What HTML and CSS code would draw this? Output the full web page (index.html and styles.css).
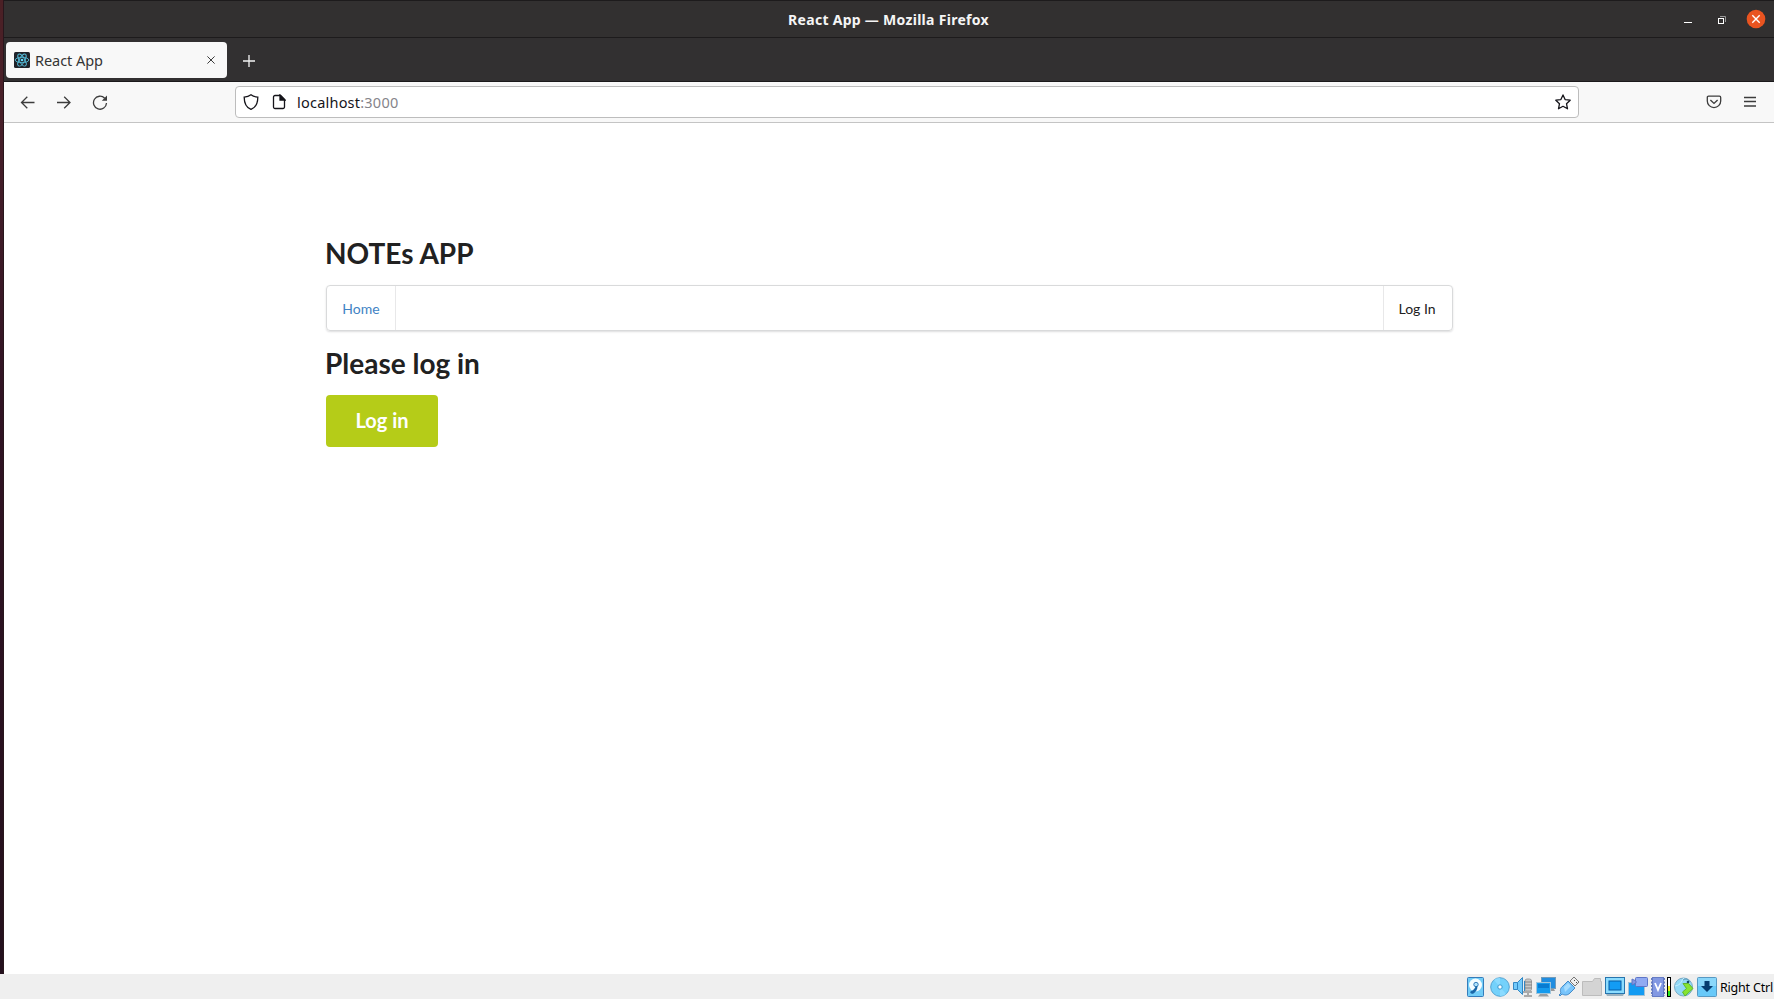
FILE: index.html
```html
<!DOCTYPE html>
<html lang="en">
<head>
<meta charset="utf-8">
<title>React App</title>
<link rel="stylesheet" href="styles.css">
</head>
<body>
<div class="screen">
  <div class="desktop-edge"></div>
  <div class="window">
    <header class="titlebar">
      <span class="window-title">React App — Mozilla Firefox</span>
      <div class="window-controls">
        <svg width="8" height="20" viewBox="0 0 8 20"><path d="M0 13.500h8" stroke="#fff"/></svg>
        <svg width="8" height="20" viewBox="0 0 8 20" fill="none"><path d="M2 7.500h5.500v5.500" stroke="#999"/><rect x=".5" y="9.500" width="5" height="5" stroke="#fff"/></svg>
        <svg width="20" height="20" viewBox="0 0 20 20"><circle cx="10" cy="10" r="9.300" fill="#e95420"/><path d="m6.300 6.300 7.400 7.400m0-7.400-7.400 7.400" stroke="#fff" stroke-width="1.400"/></svg>
      </div>
    </header>
    <div class="tabstrip">
      <div class="tab">
        <svg width="16" height="16" viewBox="0 0 16 16"><rect width="16" height="16" rx="1.500" fill="#20232a"/><g fill="none" stroke="#55bdda" stroke-width=".9"><ellipse cx="8" cy="8" rx="6.800" ry="2.700"/><ellipse cx="8" cy="8" rx="6.800" ry="2.700" transform="rotate(60 8 8)"/><ellipse cx="8" cy="8" rx="6.800" ry="2.700" transform="rotate(120 8 8)"/></g><circle cx="8" cy="8" r="1.300" fill="#61dafb"/></svg>
        <span class="tab-label">React App</span>
        <svg class="tab-close" width="8" height="8" viewBox="0 0 8 8"><path d="m.4.4 7.200 7.200m0-7.200L.4 7.600" stroke="#3c3c3c"/></svg>
      </div>
      <svg class="new-tab" width="12" height="12" viewBox="0 0 12 12"><path d="M6 0v12M0 6h12" stroke="#f4f4f4" stroke-width="1.300"/></svg>
    </div>
    <div class="toolbar">
      <div class="nav-buttons">
        <svg width="16" height="16" viewBox="0 0 16 16"><path d="M14.500 8.500H1.500m5.800-5.800-5.800 5.800 5.800 5.800"/></svg>
        <svg width="16" height="16" viewBox="0 0 16 16"><path d="M1 8.500h13M8.200 2.700 14 8.500l-5.800 5.800"/></svg>
        <svg width="16" height="16" viewBox="0 0 16 16"><path d="M12.700 4.200A6.500 6.500 0 1 0 14.500 9"/><path d="M15 1.500v5.200H9.800z" fill="#3c3c3c" stroke="none"/></svg>
      </div>
      <div class="urlbar">
        <svg width="16" height="16" viewBox="0 0 16 16"><path d="M8 .8c2 1.500 4.200 2.200 6.800 2.400C14.800 9.500 13 13.400 8 15.400 3 13.400 1.200 9.500 1.200 3.200 3.800 3 6 2.300 8 .8z"/></svg>
        <svg class="doc" width="14" height="16" viewBox="0 0 14 16"><path d="M3 1.500h5.500l4 4V13a1.500 1.500 0 0 1-1.500 1.500H3A1.500 1.500 0 0 1 1.500 13V3A1.500 1.500 0 0 1 3 1.500z"/><path d="M8 1v5h5z" fill="#15141a"/></svg>
        <span class="url">localhost<span class="port">:3000</span></span>
        <svg class="star" width="16" height="16" viewBox="0 0 16 16"><path d="m8 .9 2.100 4.700 5.100.6-3.700 3.500 1 5.100L8 12.300l-4.500 2.500 1-5.100L.8 6.200l5.100-.6z" stroke-linejoin="round"/></svg>
      </div>
      <div class="menu-buttons">
        <svg width="16" height="16" viewBox="0 0 16 16"><path d="M2.600 2.200h10.800c.8 0 1.300.5 1.300 1.300v3.400a6.700 6.700 0 0 1-13.400 0V3.500c0-.8.500-1.300 1.300-1.300z"/><path d="m4.400 6 3.600 3.400L11.600 6" stroke-width="1.400"/></svg>
        <svg width="14" height="16" viewBox="0 0 14 16"><path d="M1 3.500h12M1 7.500h12M1 12h12"/></svg>
      </div>
    </div>
    <main class="page">
      <div class="container">
        <h1 class="heading">NOTEs APP</h1>
        <nav class="menu">
          <a class="item home">Home</a>
          <a class="item login">Log In</a>
        </nav>
        <h1 class="heading prompt">Please log in</h1>
        <button class="button">Log in</button>
      </div>
    </main>
  </div>
</div>
<footer class="statusbar">
  <svg width="20" height="20" viewBox="0 0 20 20"><rect x=".5" y=".5" width="16" height="19" rx="1" fill="#72cdf8" stroke="#347dbb"/><circle cx="8.500" cy="8" r="6.500" fill="#f4fcff"/><circle cx="9" cy="7.500" r="2.200" fill="#b2e3fa" stroke="#347dbb"/><path d="M10.500 9c0 4-2 6-4 7.500-2 1-4-.5-3-2 1.500-1 4-1.500 5-5z" fill="#1967a8"/></svg>
  <svg width="20" height="20" viewBox="0 0 20 20"><circle cx="10" cy="10" r="9.300" fill="#74d1fb" stroke="#54a3d2"/><path d="M10 10 4 3a9 9 0 0 1 6-2zM10 10l6 7a9 9 0 0 1-6 2z" fill="#8bdbff"/><circle cx="10" cy="10" r="2.200" fill="#fff" stroke="#3898cf"/></svg>
  <svg width="20" height="20" viewBox="0 0 20 20"><rect x="12" y="2" width="6.500" height="12" rx="2" fill="#c9c9c9" stroke="#a0a0a0"/><path d="M10 15h9M15 14v4m-4 1h8" stroke="#aaa" stroke-width="2"/><path d="M12 5h7M12 8h7M12 11h7" stroke="#858585"/><path d="M.5 5.500h4l5-5v17l-5-5h-4z" fill="#72cafb" stroke="#3287c4"/><path d="M4.500 5.500v7M11.500 4v10" stroke="#3287c4"/></svg>
  <svg width="20" height="20" viewBox="0 0 20 20"><rect x="5.500" y=".5" width="14" height="11" fill="#208de0" stroke="#739bb9"/><path d="M14 12h4l1 2h-5z" fill="#999"/><rect x=".5" y="5.500" width="14" height="11" fill="#159bee" stroke="#9ec5dd"/><path d="M2 7h11v4H2z" fill="#087bd1"/><path d="M4 17h7l2 2.500H2z" fill="#999fa3"/></svg>
  <svg width="20" height="20" viewBox="0 0 20 20"><path d="m11 4 4-4 5 5-4 4z" fill="#eee" stroke="#777"/><path d="m15 3 1 1m1 1 1 1" stroke="#444"/><path d="m9 4 7 7-5 5c-3 3-6 2-8 1l-2 2-1-1 2-2c-1-2-1-5 2-7z" fill="#77c4fb" stroke="#458bc8"/><path d="m5 10 4-4 3 3-6 6z" fill="#a5dcff"/></svg>
  <svg width="20" height="20" viewBox="0 0 20 20"><path d="M.5 4.500h10l2-3h6v3h1v14H.5z" fill="#d4d4d4" stroke="#bcbcbc"/></svg>
  <svg width="20" height="20" viewBox="0 0 20 20"><rect x=".5" y=".5" width="19" height="16" fill="#8bdcff" stroke="#2775ae"/><rect x="4" y="4" width="12" height="9" fill="#139cf5" stroke="#075ca6"/><path d="M1 17h18l-1 2H2z" fill="#9cb2bf"/></svg>
  <svg width="20" height="20" viewBox="0 0 20 20"><rect x=".5" y="5.500" width="16" height="13" fill="#139bf2" stroke="#a5c2d3"/><rect x="7.500" y=".5" width="12" height="9" rx="1" fill="#91aaf2" stroke="#5e75c7"/><path d="m8 4-4-2v6l4-2z" fill="#8196e4" stroke="#5e75c7"/></svg>
  <svg width="14" height="20" viewBox="0 0 14 20"><rect x="1.500" y=".5" width="11" height="19" fill="#8298e2" stroke="#657bc4"/><path d="M.5 1v18M13.500 1v18" stroke="#657bc4" stroke-dasharray="2 1.500"/><path d="m4 6 3 7 3-7" fill="none" stroke="#fff" stroke-width="1.800"/></svg>
  <svg class="meter" width="4" height="20" viewBox="0 0 4 20"><path d="M0 0h4v20H0z"/><path d="M1 1h2v8H1z" fill="#fff"/><path d="M1 9h2v5H1z" fill="#e9ef22"/><path d="M1 14h2v5H1z" fill="#28e820"/></svg>
  <svg width="20" height="20" viewBox="0 0 20 20"><circle cx="9.500" cy="10" r="9" fill="#91d8f6" stroke="#7aabc6"/><path d="M10 1c-3 2-2 7-9 8" stroke="#c6efff" fill="none"/><path d="M9 3c4-2 6 0 6 2" fill="none" stroke="#5996b5"/><circle cx="14" cy="5" r="1.300" fill="#174966"/><path d="M9 6.500h5.500l4.500 5-8 7.500-2.500-4 4-3.500z" fill="#86e431" stroke="#60b52d"/></svg>
  <svg width="20" height="20" viewBox="0 0 20 20"><rect x=".5" y=".5" width="19" height="19" rx="1" fill="#68c9f9" stroke="#5799c3"/><path d="M1 1h18v8H1z" fill="#8ad7fb"/><path d="M7.500 4h5v5H16l-6 6-6-6h3.500z" fill="#063c70"/></svg>
  <span class="host-key">Right Ctrl</span>
</footer>
</body>
</html>
```
FILE: styles.css
```css
* { box-sizing: border-box; }
body { margin: 0; height: 999px; overflow: hidden; background: #fff; font-family: "Noto Sans", sans-serif; }
svg { display: block; flex: none; }
.screen { display: flex; height: 974px; }
.desktop-edge { width: 4px; background: linear-gradient(#4b2025 0, #48202a 120px, #301323 400px, #24101d 100%); border-right: 1px solid #28161c; }
.window { flex: 1; min-width: 0; display: flex; flex-direction: column; }
.titlebar { height: 38px; background: #323030; border-top: 1px solid #1d1b1c; border-bottom: 1px solid #1d1b1c; display: grid; grid-template-columns: 1fr auto 1fr; align-items: center; }
.window-title { grid-column: 2; color: #f5f5f5; font-size: 14px; font-weight: 700; white-space: nowrap; letter-spacing: .29px; margin-left: -1px; }
.window-controls { justify-self: end; display: flex; align-items: center; padding-right: 8px; }
.window-controls svg:nth-child(2) { margin: 0 20px 0 26px; }
.tabstrip { height: 44px; background: #323031; border-bottom: 1px solid #1b191b; display: flex; align-items: flex-start; padding: 4px 0 0 2px; }
.tab { width: 221px; height: 36px; border-radius: 4px; background: #f8f8f8; display: flex; align-items: center; padding: 0 12px 0 8px; }
.tab-label { margin-left: 5px; font-size: 14.500px; letter-spacing: -.05px; color: #343434; }
.tab-close { margin-left: auto; }
.new-tab { margin: 12.500px 0 0 15.500px; }
.toolbar { height: 41px; background: #f8f8f8; border-bottom: 1px solid #c4c4c4; display: flex; align-items: center; }
.toolbar svg { fill: none; stroke: #3c3c3c; stroke-width: 1.300; }
.nav-buttons { display: flex; gap: 20px; width: 231px; padding-left: 16px; }
.urlbar { width: 1344px; height: 32px; background: #fff; border: 1px solid #bdbdbd; border-radius: 4px; display: flex; align-items: center; padding: 0 7px; }
.toolbar .urlbar svg { stroke: #15141a; }
.doc { margin-left: 13px; }
.url { margin-left: 11px; font-size: 14.500px; letter-spacing: .22px; color: #15141a; }
.port { color: #85848a; }
.star { margin-left: auto; }
.menu-buttons { margin-left: auto; display: flex; gap: 21px; padding-right: 17px; }
.page { flex: 1; background: #fff; padding: 112px 0 0 322px; font-family: Lato, sans-serif; }
.container { width: 1127px; }
.heading { margin: 0 0 0 -1px; height: 36px; font-size: 28px; line-height: 36px; font-weight: 700; color: #212121; }
.menu { margin-top: 14px; height: 46px; border: 1px solid #d9dadb; border-radius: 4px; box-shadow: 0 1px 2px rgba(34,36,38,.15); display: flex; justify-content: space-between; font-size: 14px; }
.item { display: flex; align-items: center; justify-content: center; width: 69px; }
.home { color: #4183c4; border-right: 1px solid #e8e8e9; }
.login { color: #212121; border-left: 1px solid #e8e8e9; padding-right: 2px; }
.prompt { margin-top: 14px; }
.button { display: block; width: 112px; height: 52px; margin-top: 14px; padding: 0 0 2px; border: 0; border-radius: 4px; background: #b5cc18; color: #fff; font: 700 20px Lato, sans-serif; }
.statusbar { height: 25px; background: #efefef; display: flex; align-items: center; gap: 3px; padding: 1px 0 0 1467px; }
.meter { margin-left: -1px; }
.host-key { font: 12.500px "Noto Sans", sans-serif; letter-spacing: -.2px; white-space: nowrap; color: #000; }
```
